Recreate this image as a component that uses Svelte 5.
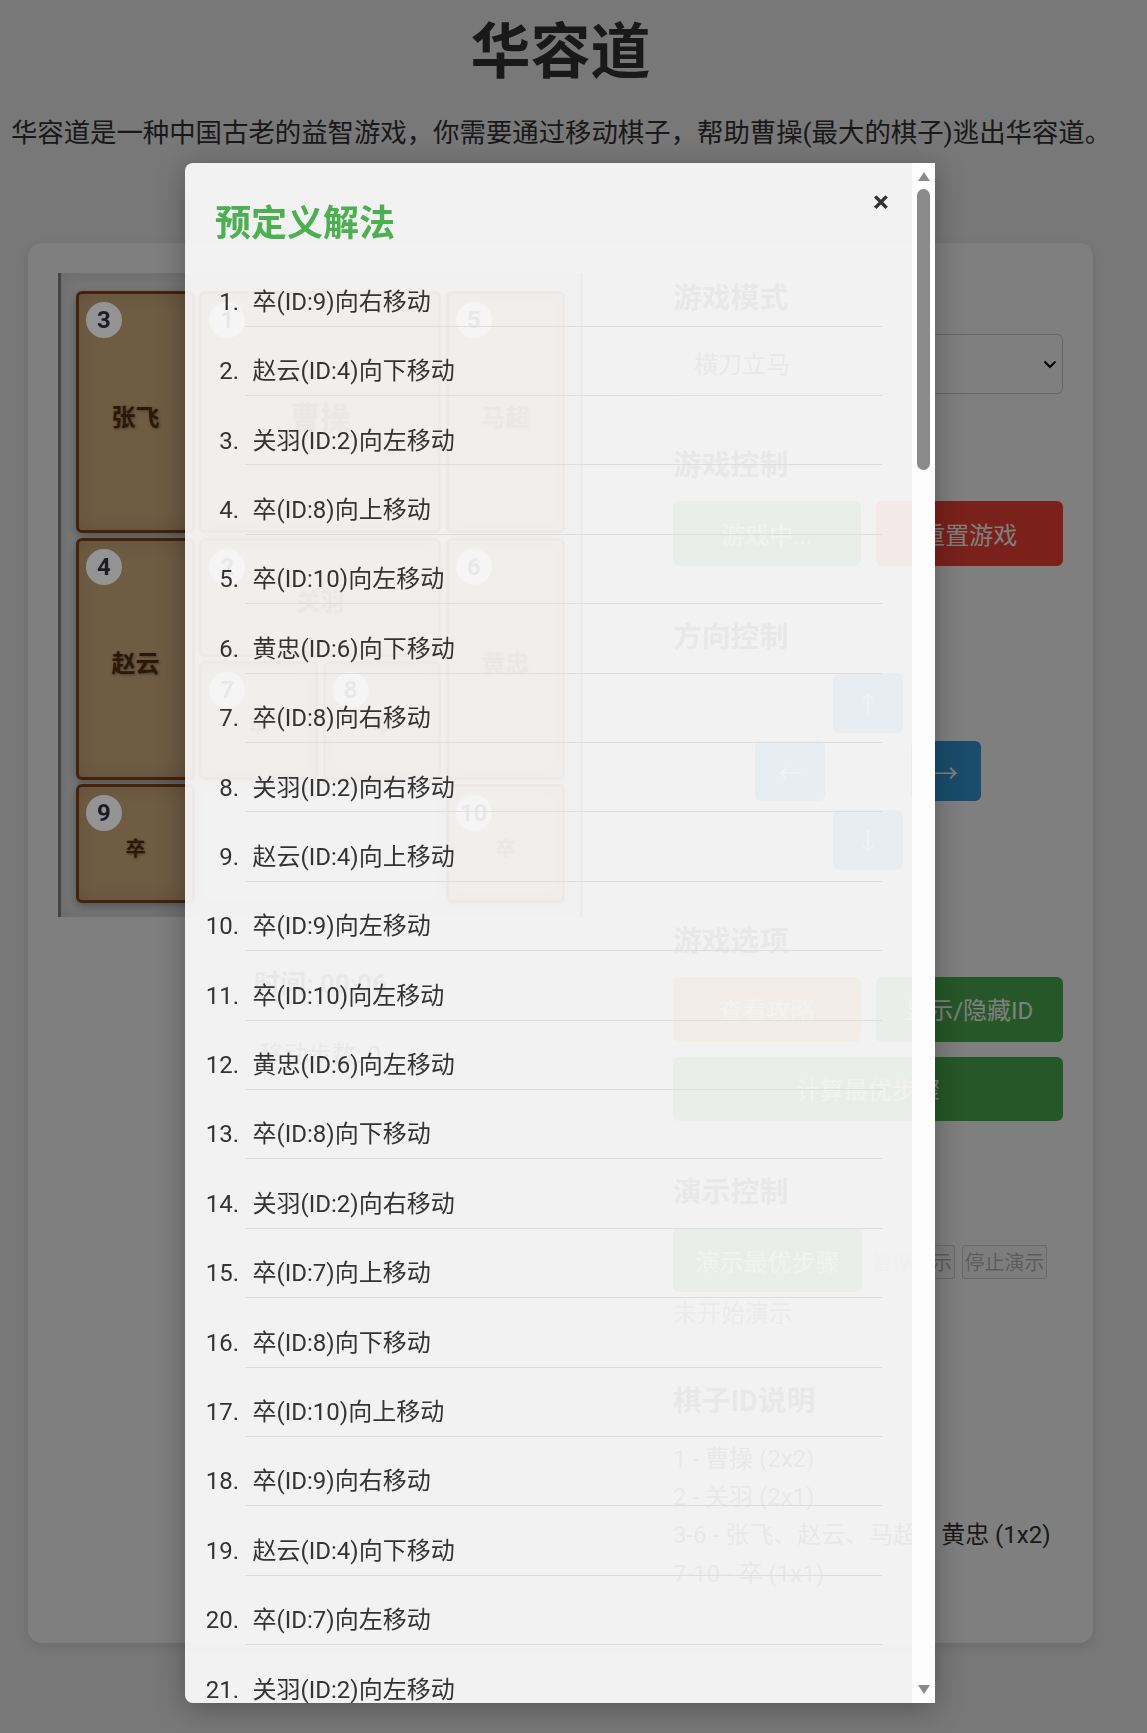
<script>
    let showModal = $state(true);

    const pieces = [
        { id: 3, name: '张飞', col: 1, row: 1, w: 1, h: 2 },
        { id: 1, name: '曹操', col: 2, row: 1, w: 2, h: 2, big: true },
        { id: 5, name: '马超', col: 4, row: 1, w: 1, h: 2 },
        { id: 4, name: '赵云', col: 1, row: 3, w: 1, h: 2 },
        { id: 2, name: '关羽', col: 2, row: 3, w: 2, h: 1 },
        { id: 6, name: '黄忠', col: 4, row: 3, w: 1, h: 2 },
        { id: 7, name: '卒', col: 2, row: 4, w: 1, h: 1, small: true },
        { id: 8, name: '卒', col: 3, row: 4, w: 1, h: 1, small: true },
        { id: 9, name: '卒', col: 1, row: 5, w: 1, h: 1, small: true },
        { id: 10, name: '卒', col: 4, row: 5, w: 1, h: 1, small: true }
    ];

    const steps = [
        '卒(ID:9)向右移动', '赵云(ID:4)向下移动', '关羽(ID:2)向左移动', '卒(ID:8)向上移动',
        '卒(ID:10)向左移动', '黄忠(ID:6)向下移动', '卒(ID:8)向右移动', '关羽(ID:2)向右移动',
        '赵云(ID:4)向上移动', '卒(ID:9)向左移动', '卒(ID:10)向左移动', '黄忠(ID:6)向左移动',
        '卒(ID:8)向下移动', '关羽(ID:2)向右移动', '卒(ID:7)向上移动', '卒(ID:8)向下移动',
        '卒(ID:10)向上移动', '卒(ID:9)向右移动', '赵云(ID:4)向下移动', '卒(ID:7)向左移动',
        '关羽(ID:2)向左移动'
    ];
</script>

<main>
    <h1>华容道</h1>
    <p class="intro">华容道是一种中国古老的益智游戏，你需要通过移动棋子，帮助曹操(最大的棋子)逃出华容道。</p>

    <div class="card">
        <div class="left">
            <div class="board">
                {#each pieces as p}
                    <div
                        class="piece"
                        class:big={p.big}
                        class:small={p.small}
                        style="grid-column: {p.col} / span {p.w}; grid-row: {p.row} / span {p.h}"
                    >
                        <span class="badge">{p.id}</span>
                        {p.name}
                    </div>
                {/each}
            </div>
            <div class="timer">时间: 00:06</div>
            <div class="moves">移动步数: 0</div>
        </div>

        <div class="panel">
            <section>
                <h3>游戏模式</h3>
                <div class="select-wrap">
                    <select>
                        <option>横刀立马</option>
                    </select>
                    <svg class="chevron" width="14" height="9" viewBox="0 0 14 9">
                        <path d="M1.5 1.5 L7 7 L12.5 1.5" fill="none" stroke="#000" stroke-width="2" />
                    </svg>
                </div>
            </section>

            <section>
                <h3>游戏控制</h3>
                <div class="btn-row">
                    <button class="btn green">游戏中...</button>
                    <button class="btn red">重置游戏</button>
                </div>
            </section>

            <section>
                <h3>方向控制</h3>
                <div class="dpad">
                    <button class="btn blue up">↑</button>
                    <button class="btn blue left-key">←</button>
                    <button class="btn blue right-key">→</button>
                    <button class="btn blue down">↓</button>
                </div>
            </section>

            <section>
                <h3>游戏选项</h3>
                <div class="btn-row">
                    <button class="btn orange" onclick={() => (showModal = true)}>查看攻略</button>
                    <button class="btn green">显示/隐藏ID</button>
                    <button class="btn green wide">计算最优步骤</button>
                </div>
            </section>

            <section>
                <h3>演示控制</h3>
                <div class="demo-row">
                    <button class="btn green demo">演示最优步骤</button>
                    <button class="plain" disabled>暂停演示</button>
                    <button class="plain" disabled>停止演示</button>
                </div>
                <div class="demo-status">未开始演示</div>
            </section>

            <section>
                <h3>棋子ID说明</h3>
                <div class="legend">
                    <div>1 - 曹操 (2x2)</div>
                    <div>2 - 关羽 (2x1)</div>
                    <div>3-6 - 张飞、赵云、马超、黄忠 (1x2)</div>
                    <div>7-10 - 卒 (1x1)</div>
                </div>
            </section>
        </div>
    </div>
</main>

{#if showModal}
    <div class="backdrop"></div>
    <div class="modal-wrap">
        <div class="modal">
            <div class="modal-body">
                <button class="close" onclick={() => (showModal = false)}>×</button>
                <h2>预定义解法</h2>
                <ol>
                    {#each steps as step}
                        <li>{step}</li>
                    {/each}
                </ol>
            </div>
            <div class="scrollbar">
                <svg class="arrow" width="12" height="9" viewBox="0 0 12 9"><path d="M6 0 L12 9 L0 9 Z" fill="#8a8a8a" /></svg>
                <div class="thumb"></div>
                <svg class="arrow bottom" width="12" height="9" viewBox="0 0 12 9"><path d="M0 0 L12 0 L6 9 Z" fill="#8a8a8a" /></svg>
            </div>
        </div>
    </div>
{/if}

<style>
:global(body) {
    background: #f0f0f0;
    color: #333;
    font-family: Roboto, "Noto Sans CJK SC", sans-serif;
    line-height: 1.6;
    font-size: 24px;
}

main {
    width: 1121px;
    height: 1733px;
    overflow: hidden;
}

h1 {
    margin: 6px 0 0;
    font-size: 60px;
    text-align: center;
    line-height: 94px;
}

.intro {
    margin: 11.5px 0 0 1px;
    font-size: 26.4px;
    line-height: 42.4px;
    text-align: center;
    white-space: nowrap;
}

.card {
    display: flex;
    gap: 90px;
    margin: 89px 28px 0;
    padding: 30px;
    height: 1400px;
    box-sizing: border-box;
    background: white;
    border-radius: 14px;
    box-shadow: 0 4px 12px rgba(0, 0, 0, 0.1);
}

.left {
    width: 525px;
    text-align: center;
}

.board {
    display: grid;
    grid-template-columns: repeat(4, 118.9px);
    grid-template-rows: repeat(5, 118.8px);
    gap: 4.4px;
    box-sizing: border-box;
    height: 644.5px;
    padding: 18.5px 15px 0;
    background: #eee;
    border-left: 3px solid #888;
    border-right: 3px solid #888;
    box-shadow: inset 0 0 20px rgba(0, 0, 0, 0.12);
}

.piece {
    position: relative;
    display: flex;
    align-items: center;
    justify-content: center;
    padding-top: 11px;
    box-sizing: border-box;
    background: #deb887;
    border: 3px solid #8b4513;
    border-radius: 6px;
    color: #5d2e0c;
    font-size: 24px;
    font-weight: bold;
    text-shadow: 1px 1px 3px rgba(0, 0, 0, 0.35);
    box-shadow: 0 3px 8px rgba(0, 0, 0, 0.3), inset 0 0 20px rgba(0, 0, 0, 0.12);
}

.piece.big {
    font-size: 30px;
}

.piece.small {
    font-size: 20px;
}

.badge {
    position: absolute;
    top: 8px;
    left: 7px;
    z-index: 2;
    width: 36px;
    height: 36px;
    border-radius: 50%;
    background: #949494;
    color: #1c1c24;
    font-size: 24px;
    line-height: 36px;
    text-align: center;
    text-shadow: none;
}

.timer {
    margin-top: 47px;
    font-size: 26px;
    font-weight: bold;
}

.moves {
    margin-top: 30px;
    font-size: 24px;
}

.panel {
    width: 390px;
}

section {
    margin-bottom: 46px;
}

h3 {
    margin: 0 0 13px;
    padding-top: 2px;
    font-size: 28.8px;
    font-weight: bold;
    line-height: 46px;
}

.select-wrap {
    position: relative;
}

select {
    display: block;
    width: 100%;
    height: 60px;
    padding: 2px 20px 0;
    background: white;
    border: 1px solid #ccc;
    border-radius: 6px;
    color: #333;
    font: inherit;
    appearance: none;
}

.chevron {
    position: absolute;
    top: 26px;
    right: 6px;
}

.btn-row {
    display: grid;
    grid-template-columns: 1fr 1fr;
    gap: 15px;
}

.btn {
    height: 64.8px;
    padding: 5px 0 0;
    border: none;
    border-radius: 6px;
    color: white;
    font: inherit;
}

.btn.wide {
    grid-column: 1 / span 2;
}

.green {
    background: #4caf50;
}

.red {
    background: #f44336;
}

.orange {
    background: #ff9800;
}

.blue {
    background: #3498db;
}

.dpad {
    display: grid;
    grid-template-columns: repeat(3, 70px);
    grid-auto-rows: 60px;
    gap: 8.5px 8px;
    justify-content: center;
}

.dpad .btn {
    height: 100%;
}

.up {
    grid-column: 2;
    grid-row: 1;
}

.left-key {
    grid-column: 1;
    grid-row: 2;
}

.right-key {
    grid-column: 3;
    grid-row: 2;
}

.down {
    grid-column: 2;
    grid-row: 3;
}

.demo-row {
    display: flex;
    align-items: flex-start;
    gap: 7.5px;
}

.btn.demo {
    width: 189px;
    flex-shrink: 0;
    height: 64px;
}

.plain {
    width: 85px;
    height: 34px;
    margin-top: 17px;
    padding: 2px 0 0;
    background: rgba(239, 239, 239, 0.3);
    border: 1px solid rgba(118, 118, 118, 0.3);
    border-radius: 3px;
    color: rgba(16, 16, 16, 0.3);
    font: inherit;
    font-size: 20px;
    line-height: 28px;
}

.demo-status {
    margin-top: 3px;
    margin-bottom: -4px;
    color: #666;
}

.legend {
    padding-top: 3px;
}

.backdrop {
    position: fixed;
    inset: 0;
    z-index: 1;
    background: rgba(0, 0, 0, 0.5);
}

.modal-wrap {
    position: fixed;
    inset: 0;
    z-index: 3;
    display: flex;
    justify-content: center;
    box-sizing: border-box;
    padding: 163px 27px 30px 0;
}

.modal {
    display: flex;
    width: 750px;
    border-radius: 8px 0 0 8px;
    box-shadow: 0 5px 30px rgba(0, 0, 0, 0.3);
}

.modal-body {
    position: relative;
    flex: 1;
    overflow: hidden;
    box-sizing: border-box;
    padding: 30px 30px 0;
    background: rgba(255, 255, 255, 0.9);
    border-radius: 8px 0 0 8px;
}

h2 {
    margin: 3px 0 30px;
    color: #4caf50;
    font-size: 36px;
    font-weight: bold;
    line-height: 56.3px;
}

.close {
    position: absolute;
    top: 15px;
    right: 23px;
    padding: 0;
    background: none;
    border: none;
    color: #333;
    font: inherit;
    font-size: 30px;
    font-weight: bold;
}

ol {
    margin: 0;
    padding: 0 0 0 30px;
}

li {
    margin-bottom: 25px;
    padding: 0.5px 0 4.5px 7.5px;
    border-bottom: 1px solid #ddd;
}

.scrollbar {
    display: flex;
    flex-direction: column;
    align-items: center;
    width: 23px;
    background: #fdfdfd;
}

.arrow {
    margin-top: 9px;
}

.arrow.bottom {
    margin-top: auto;
    margin-bottom: 9px;
}

.thumb {
    width: 13px;
    height: 281px;
    margin-top: 8px;
    background: #8a8a8a;
    border-radius: 7px;
}
</style>
